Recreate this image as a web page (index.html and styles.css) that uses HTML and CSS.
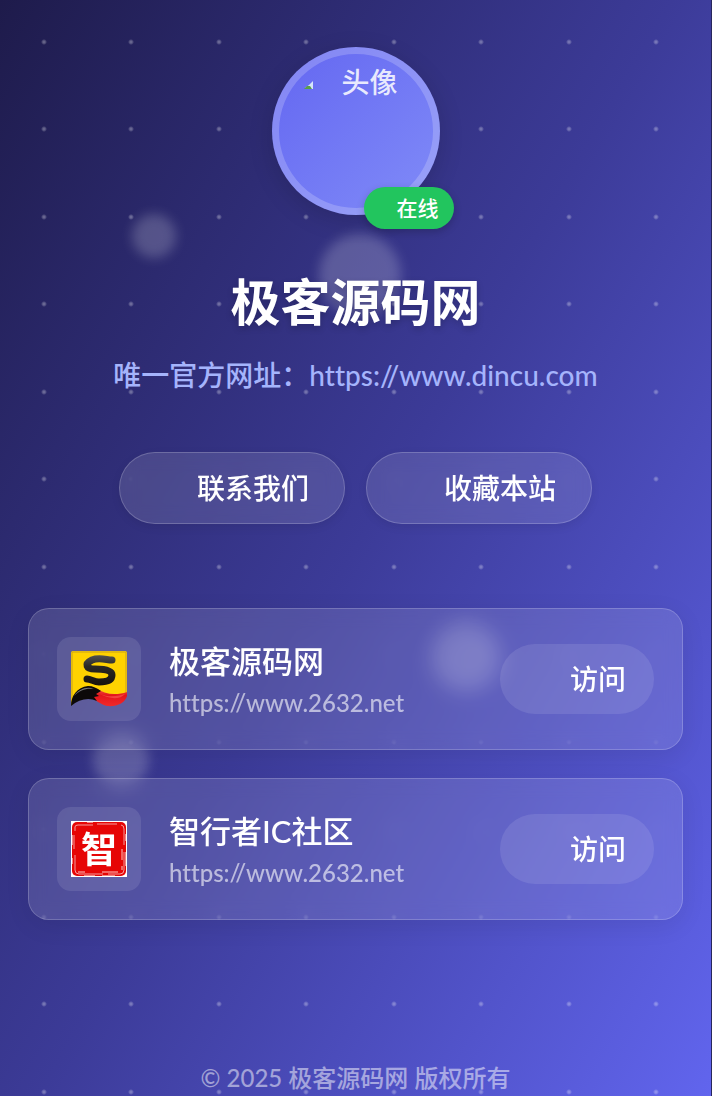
FILE: index.html
```html
<!DOCTYPE html>
<html lang="zh-CN">
  <head>
    <meta charset="UTF-8" />
    <meta name="viewport" content="width=device-width, initial-scale=1" />
    <title>极客源码网</title>
    <link rel="stylesheet" href="styles.css">
  </head>
  <body>
    <div class="bubbles" aria-hidden="true">
      <span class="bubble bubble-1"></span>
      <span class="bubble bubble-2"></span>
      <span class="bubble bubble-3"></span>
      <span class="bubble bubble-4"></span>
    </div>

    <div class="container">
      <header class="profile">
        <div class="avatar-wrap">
          <div class="avatar">
            <svg class="avatar-icon" viewBox="0 0 10 10" aria-hidden="true">
              <path d="M1 8 L5 5 L9 1 V9 H1z" fill="#d5e4fb" />
              <path d="M0 9 L3 6 L6 6 L8 9z" fill="#5a9e4b" />
            </svg>
            <span>头像</span>
          </div>
          <span class="status">在线</span>
        </div>
        <h1>极客源码网</h1>
        <p class="tagline">唯一官方网址：https://www.dincu.com</p>
        <div class="actions">
          <button type="button" class="btn">联系我们</button>
          <button type="button" class="btn">收藏本站</button>
        </div>
      </header>

      <main class="links">
        <article class="card">
          <div class="card-icon">
            <svg viewBox="0 0 56 56" aria-hidden="true">
              <defs>
                <linearGradient id="ink" gradientUnits="userSpaceOnUse" x1="0" y1="3" x2="0" y2="34">
                  <stop offset="0" stop-color="#555" />
                  <stop offset="0.4" stop-color="#2a2826" />
                  <stop offset="1" stop-color="#17120d" />
                </linearGradient>
                <linearGradient id="tip" x1="0" y1="0" x2="0" y2="1">
                  <stop offset="0" stop-color="#f4604c" />
                  <stop offset="0.4" stop-color="#e3141b" />
                  <stop offset="1" stop-color="#f02a2a" />
                </linearGradient>
              </defs>
              <path d="M2 0H54Q56 0 56 2V43Q48 50 34 46L16 42L0 54V2Q0 0 2 0z" fill="#ffd200" />
              <path d="M1 54V2Q1 1 2 1H54Q55 1 55 2V42" fill="none" stroke="#c9a21c" />
              <path d="M41 9C36 9 28 6 21 9C13 13 15 18 24 18C33 18 41 19 41 24C41 30 34 31 28 31C23 31 20 28 16 28" fill="none" stroke="url(#ink)" stroke-width="7" stroke-linecap="round" stroke-linejoin="round" />
              <path d="M25 37C33 43 44 45 56 41V45C54 52 46 56 36 55C29 53 24 49 21 46z" fill="url(#tip)" />
              <path d="M0 55C0 45 6 36 17 35C22 35 26 37 30 40L25 43L28 45L23 46L26 50C18 46 8 48 0 55z" fill="#0c0909" />
              <path d="M3 45C8 38 16 35 23 38C15 37 9 39 3 45z" fill="#777" />
              <path d="M29 43C38 47 48 45 54 43C49 49 38 48 29 43z" fill="#ff6b60" opacity=".5" />
            </svg>
          </div>
          <div class="card-info">
            <h2>极客源码网</h2>
            <p>https://www.2632.net</p>
          </div>
          <a class="visit" href="https://www.2632.net">访问</a>
        </article>

        <article class="card">
          <div class="card-icon">
            <svg viewBox="0 0 56 56" aria-hidden="true">
              <rect width="56" height="56" fill="#fff" />
              <rect x="1" y="1" width="54" height="54" rx="5" fill="#e60505" />
              <path d="M4 10V6Q4 4 7 4H22M26 3H46M50 4Q53 4 53 8V24M53 31V49Q53 53 49 53H37M32 53H8Q4 53 4 49V34M3 28V14" fill="none" stroke="#fff" stroke-width="1" opacity=".6" />
              <path d="M1 14V24M1 37V43M55 13V20M55 31V45M13 55H24M31 55H44M16 1H22" stroke="#fff" stroke-width="1" />
              <path d="M51 28V39M31 51H47M7 51H14M51 45V49" stroke="#ffc9c4" stroke-width="1" />
              <text class="seal" x="28" y="42" text-anchor="middle">智</text>
            </svg>
          </div>
          <div class="card-info">
            <h2>智行者IC社区</h2>
            <p>https://www.2632.net</p>
          </div>
          <a class="visit" href="https://www.2632.net">访问</a>
        </article>
      </main>

      <footer>© 2025 极客源码网 版权所有</footer>
    </div>
  </body>
</html>
```

FILE: styles.css
```css
* {
  margin: 0;
  padding: 0;
  box-sizing: border-box;
}

body {
  position: relative;
  min-height: 100vh;
  overflow-x: hidden;
  font-family: Lato, "Noto Sans CJK SC", sans-serif;
  font-variant-ligatures: none;
  color: #fff;
  border-right: 1px solid #29275c;
  /* four dots per tile, then the page gradient */
  background:
    radial-gradient(circle at 44px 42px, rgba(255, 255, 255, 0.3) 1px, transparent 3px) 0 0 / 175px 175px,
    radial-gradient(circle at 131px 42px, rgba(255, 255, 255, 0.3) 1px, transparent 3px) 0 0 / 175px 175px,
    radial-gradient(circle at 44px 129px, rgba(255, 255, 255, 0.3) 1px, transparent 3px) 0 0 / 175px 175px,
    radial-gradient(circle at 131px 129px, rgba(255, 255, 255, 0.3) 1px, transparent 3px) 0 0 / 175px 175px,
    linear-gradient(120deg, #1e1b4b 0%, #3c3b98 50%, #6165ee 100%);
}

.bubble {
  position: absolute;
  border-radius: 50%;
  background: rgba(255, 255, 255, 0.2);
  filter: blur(6px);
}

.bubble-1 {
  left: 132px;
  top: 214px;
  width: 44px;
  height: 44px;
}

.bubble-2 {
  left: 319px;
  top: 234px;
  width: 82px;
  height: 82px;
}

.bubble-3 {
  left: 431px;
  top: 622px;
  width: 70px;
  height: 70px;
}

.bubble-4 {
  left: 93px;
  top: 732px;
  width: 56px;
  height: 56px;
}

.container {
  position: relative;
  padding: 47px 28px 0;
}

.profile {
  display: flex;
  flex-direction: column;
  align-items: center;
  text-align: center;
}

.avatar-wrap {
  position: relative;
  margin-bottom: 56px;
}

.avatar {
  display: flex;
  align-items: flex-start;
  gap: 28px;
  width: 168px;
  height: 168px;
  padding: 7px 0 0 25px;
  border: 7px solid rgba(255, 255, 255, 0.2);
  border-radius: 50%;
  background: linear-gradient(135deg, #6366f1, #818cf8) border-box;
  box-shadow: 0 6px 24px rgba(0, 0, 0, 0.15);
  color: rgba(255, 255, 255, 0.85);
  font-size: 28px;
  font-weight: 500;
  line-height: 42px;
}

.avatar-icon {
  width: 10px;
  height: 10px;
  margin-top: 19px;
}

.status {
  position: absolute;
  right: -14px;
  bottom: -14px;
  padding: 0 15px 0 33px;
  border-radius: 21px;
  background: #22c55e;
  box-shadow: 0 3px 8px rgba(0, 0, 0, 0.2);
  font-size: 21px;
  font-weight: 500;
  line-height: 42px;
}

h1 {
  margin-bottom: 21px;
  font-size: 50px;
  font-weight: 700;
  line-height: 62px;
  text-shadow: 0 3px 7px rgba(0, 0, 0, 0.2);
}

.tagline {
  margin-bottom: 56px;
  color: #a5b4fc;
  font-size: 28px;
  font-weight: 500;
  line-height: 42px;
}

.actions {
  display: flex;
  gap: 21px;
  margin-bottom: 84px;
}

.btn {
  padding: 14px 35px 14px 77px;
  border: 1px solid rgba(255, 255, 255, 0.2);
  border-radius: 36px;
  background: rgba(255, 255, 255, 0.12);
  backdrop-filter: blur(9px);
  box-shadow: 0 3px 10px rgba(0, 0, 0, 0.08);
  color: #fff;
  font: inherit;
  font-size: 28px;
  font-weight: 500;
  line-height: 42px;
  cursor: pointer;
}

.links {
  display: flex;
  flex-direction: column;
  gap: 28px;
}

.card {
  display: flex;
  align-items: center;
  gap: 28px;
  padding: 28px;
  border: 1px solid rgba(255, 255, 255, 0.2);
  border-radius: 21px;
  background: rgba(255, 255, 255, 0.12);
  backdrop-filter: blur(9px);
  box-shadow: 0 6px 24px rgba(0, 0, 0, 0.08);
}

.card-icon {
  width: 84px;
  height: 84px;
  padding: 14px;
  border-radius: 14px;
  background: rgba(255, 255, 255, 0.1);
}

.card-icon svg {
  display: block;
  overflow: visible;
}

.seal {
  fill: #fff;
  font-family: "Noto Sans CJK SC", sans-serif;
  font-size: 36px;
  font-weight: 700;
}

.card-info {
  flex: 1;
}

.card-info h2 {
  font-size: 31px;
  font-weight: 500;
  line-height: 48px;
}

.card-info p {
  color: rgba(255, 255, 255, 0.6);
  font-size: 24px;
  font-weight: 500;
  line-height: 36px;
}

.visit {
  padding: 14px 28px 14px 70px;
  border-radius: 35px;
  background: rgba(255, 255, 255, 0.1);
  color: #fff;
  font-size: 28px;
  font-weight: 500;
  line-height: 42px;
  text-decoration: none;
}

footer {
  margin-top: 140px;
  color: rgba(255, 255, 255, 0.5);
  font-size: 24px;
  font-weight: 500;
  line-height: 36px;
  text-align: center;
}
```
